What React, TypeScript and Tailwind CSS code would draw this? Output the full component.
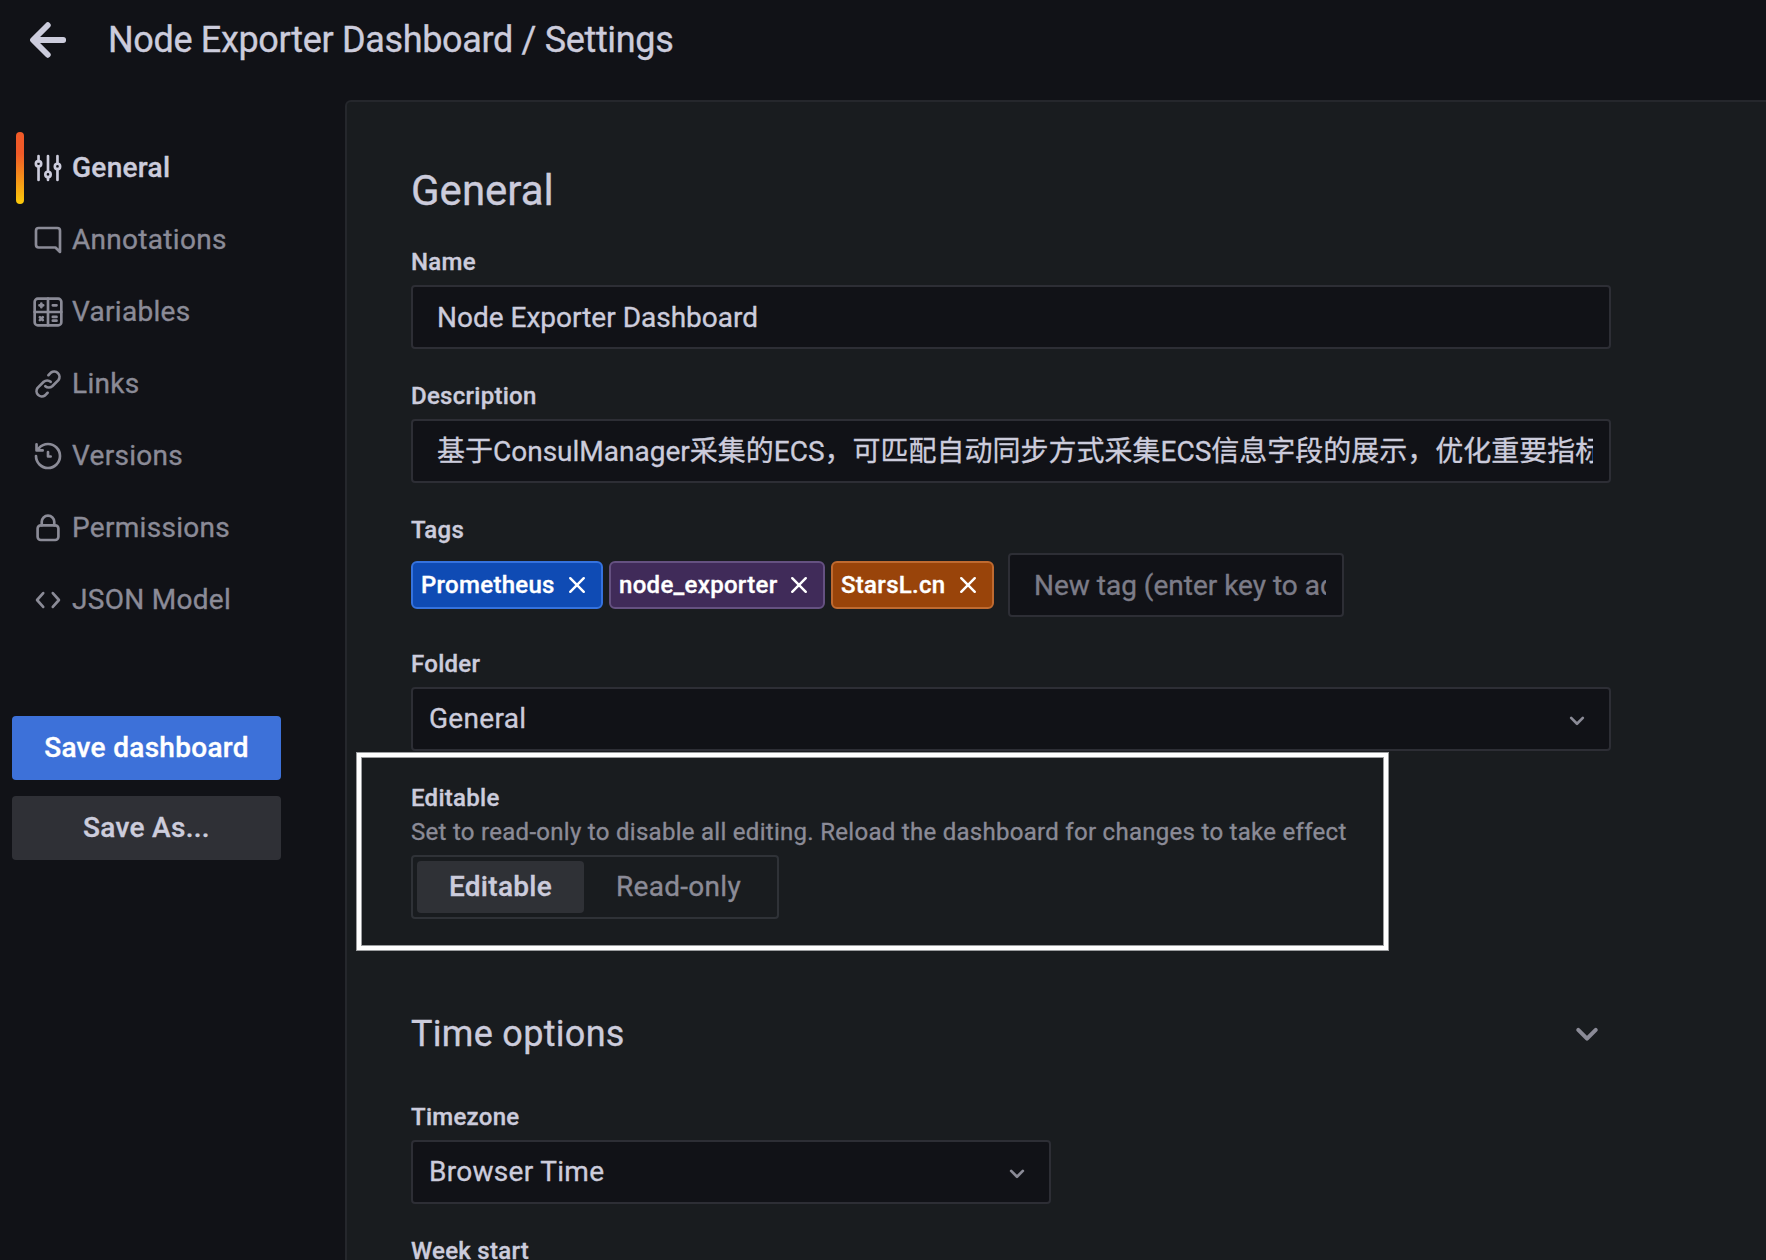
import React from "react";

type IconProps = { size?: number; className?: string; children: React.ReactNode; sw?: number };

function Icon({ size = 32, className = "", children, sw = 2 }: IconProps) {
  return (
    <svg
      width={size}
      height={size}
      viewBox="0 0 24 24"
      fill="none"
      stroke="currentColor"
      strokeWidth={sw}
      strokeLinecap="round"
      strokeLinejoin="round"
      className={`shrink-0 ${className}`}
    >
      {children}
    </svg>
  );
}

const ArrowLeft = () => (
  <Icon size={48} sw={2.9} className="text-[#ccccdc]">
    <path d="M19.6 12H5M11.9 4.6 4.5 12l7.4 7.4" />
  </Icon>
);

const Sliders = () => (
  <Icon>
    <path d="M4.9 3v4M4.9 10.8V21M12 3v11.8M12 18.8V21M19.1 3v5.8M19.1 12.8V21" />
    <circle cx="4.9" cy="8.8" r="2" />
    <circle cx="12" cy="16.8" r="2" />
    <circle cx="19.1" cy="10.8" r="2" />
  </Icon>
);

const Comment = () => (
  <Icon>
    <path d="M5 3h14a2 2 0 0 1 2 2v16l-3.4-3.4H5a2 2 0 0 1-2-2V5a2 2 0 0 1 2-2z" />
  </Icon>
);

const Calculator = () => (
  <Icon>
    <rect x="2" y="2" width="20" height="20" rx="2.4" />
    <path d="M12 2v20M2 12h20M5.6 7h2.8M7 5.6v2.8M15.6 7h2.8M15.6 15.7h2.8M15.6 18.5h2.8M5.9 15.9l2.2 2.2M8.1 15.9l-2.2 2.2" />
  </Icon>
);

const Chain = () => (
  <Icon>
    <path d="M10 13.6a4 4 0 0 0 5.2.1l4.6-4.6a4 4 0 0 0-5.6-5.6l-1.9 1.9" />
    <path d="M14 10.4a4 4 0 0 0-5.2-.1l-4.6 4.6a4 4 0 0 0 5.6 5.6l1.9-1.9" />
  </Icon>
);

const History = () => (
  <Icon>
    <path d="M3 12a9 9 0 1 0 9-9 9 9 0 0 0-6.8 3.1L3.6 7.6M3.4 3.2v4.6h4.6M12 9v3.4h2" />
  </Icon>
);

const Lock = () => (
  <Icon>
    <rect x="4.2" y="10" width="15.6" height="11" rx="2.4" />
    <path d="M7.3 10V7.4a4.7 4.7 0 0 1 9.4 0V10" />
  </Icon>
);

const Code = () => (
  <Icon>
    <path d="M8.4 6.8 3.8 12l4.6 5.2M15.6 6.8l4.6 5.2-4.6 5.2" />
  </Icon>
);

const Chevron = ({ size, className, sw }: { size: number; className?: string; sw?: number }) => (
  <Icon size={size} className={className} sw={sw}>
    <path d="m7 10.2 5 5 5-5" />
  </Icon>
);

const navItems = [
  { label: "General", icon: <Sliders />, active: true },
  { label: "Annotations", icon: <Comment /> },
  { label: "Variables", icon: <Calculator /> },
  { label: "Links", icon: <Chain /> },
  { label: "Versions", icon: <History /> },
  { label: "Permissions", icon: <Lock /> },
  { label: "JSON Model", icon: <Code /> },
];

const tags = [
  { label: "Prometheus", color: "bg-[#0f4bb4] border-[#3572de]", width: "w-[192px]" },
  { label: "node_exporter", color: "bg-[#402b59] border-[#655181]", width: "w-[216px]" },
  { label: "StarsL.cn", color: "bg-[#99440a] border-[#bf6a30]", width: "w-[163px]" },
];

function Label({ children, gap = "mb-[11px]" }: { children: React.ReactNode; gap?: string }) {
  return <div className={`h-6 text-[24px] leading-[24px] font-medium tracking-[0.28px] ${gap}`}>{children}</div>;
}

const box = "h-16 shrink-0 rounded-[4px] border-2 border-[#2d2e35] bg-[#111217]";

function Select({ value, className }: { value: string; className: string }) {
  return (
    <div className={`${box} flex items-center justify-between pl-4 pr-[18px] ${className}`}>
      <span className="-mt-px leading-[32px]">{value}</span>
      <Chevron size={28} sw={2.3} className="mt-0.5 text-[#8b8b97]" />
    </div>
  );
}

export default function App() {
  return (
    <div className="flex h-[1260px] w-[1766px] flex-col overflow-hidden bg-[#111217] font-['Roboto','Noto_Sans_CJK_SC',sans-serif] text-[28px] leading-[32px] tracking-[0.3px] text-[#ccccdc] [-webkit-text-stroke:0.35px]">
      <header className="flex h-[100px] shrink-0 items-start pl-6 pt-4">
        <ArrowLeft />
        <h1 className="ml-9 mt-1 text-[36px] leading-[40px] tracking-[-0.34px]">Node Exporter Dashboard / Settings</h1>
      </header>

      <div className="flex min-h-0 flex-1">
        <aside className="w-[345px] shrink-0 pt-8">
          <nav className="flex flex-col">
            {navItems.map((item) => (
              <div
                key={item.label}
                className={`flex h-[72px] items-center pl-4 ${item.active ? "font-medium" : "text-[#8b8b97]"}`}
              >
                <span
                  className={`mr-2 h-full w-2 rounded-[4px] ${item.active ? "bg-[linear-gradient(180deg,#f05a28_30%,#fbca0a_100%)]" : ""}`}
                />
                {item.icon}
                <span className="ml-2">{item.label}</span>
              </div>
            ))}
          </nav>
          <div className="ml-3 mt-20 flex w-[269px] flex-col gap-4 font-medium">
            <button className="h-16 rounded-[4px] bg-[#3d71d9] text-white">Save dashboard</button>
            <button className="h-16 rounded-[4px] bg-[#2f3036]">Save As...</button>
          </div>
        </aside>

        <main className="flex min-w-0 flex-1 flex-col rounded-tl-[6px] border-l-2 border-t-2 border-[#25272c] bg-[#191c1f] pl-16 pt-[65px]">
          <h2 className="mb-[35px] h-12 text-[42px] leading-[48px] tracking-normal">General</h2>

          <Label>Name</Label>
          <div className={`${box} flex w-[1200px] items-center pl-6 pr-4 pt-0.5`}>
            <span className="leading-[32px] tracking-normal">Node Exporter Dashboard</span>
          </div>

          <div className="h-[35px] shrink-0" />
          <Label>Description</Label>
          <div className={`${box} flex w-[1200px] items-center pl-6 pr-4 pt-0.5`}>
            <span className="h-9 overflow-hidden whitespace-nowrap leading-[36px] tracking-normal [-webkit-text-stroke:0.3px]">
              基于ConsulManager采集的ECS，可匹配自动同步方式采集ECS信息字段的展示，优化重要指标
            </span>
          </div>

          <div className="h-[35px] shrink-0" />
          <Label>Tags</Label>
          <div className="flex shrink-0 items-center">
            {tags.map((tag) => (
              <span
                key={tag.label}
                className={`mr-1.5 flex h-12 items-center justify-between rounded-[6px] border-2 pl-2 pr-[10px] text-[24px] leading-[28px] font-medium text-white ${tag.color} ${tag.width}`}
              >
                {tag.label}
                <Icon size={28} sw={2.1} className="text-white">
                  <path d="M6.2 6.2 17.8 17.8M17.8 6.2 6.2 17.8" />
                </Icon>
              </span>
            ))}
            <div className={`${box} ml-2 flex w-[336px] items-center pl-6 pr-4 pt-0.5`}>
              <span className="overflow-hidden whitespace-nowrap leading-[36px] tracking-normal text-[#7c7c88]">
                New tag (enter key to add)
              </span>
            </div>
          </div>

          <div className="h-[35px] shrink-0" />
          <Label>Folder</Label>
          <Select value="General" className="w-[1200px]" />

          <section className="relative mt-[35px] shrink-0">
            <div className="pointer-events-none absolute -left-[55px] -top-[34px] h-[199px] w-[1033px] border border-[#9b9d9f]">
              <div className="h-full w-full border-4 border-white">
                <div className="h-full w-full border border-[#9b9d9f]" />
              </div>
            </div>
            <Label gap="mb-2">Editable</Label>
            <p className="mb-[11px] h-[26px] text-[24px] leading-[28px] tracking-[0.285px] text-[#8b8b97]">
              Set to read-only to disable all editing. Reload the dashboard for changes to take effect
            </p>
            <div className="flex h-16 w-[368px] items-center rounded-[4px] border-2 border-[#2f3237] p-1">
              <div className="flex h-[52px] w-[167px] items-center justify-center rounded-[4px] bg-[#2f3136] font-medium">
                Editable
              </div>
              <div className="flex h-[52px] flex-1 items-center justify-center text-[#8b8b97]">Read-only</div>
            </div>
          </section>

          <div className="mt-[91px] flex h-12 w-[1200px] shrink-0 items-center justify-between pr-[3px]">
            <h3 className="text-[36px] leading-[48px] tracking-[0.3px]">Time options</h3>
            <Chevron size={42} sw={2.3} className="-mt-[3px] text-[#8b8b97]" />
          </div>

          <div className="h-[47px] shrink-0" />
          <Label>Timezone</Label>
          <Select value="Browser Time" className="w-[640px]" />

          <div className="h-[35px] shrink-0" />
          <Label>Week start</Label>
        </main>
      </div>
    </div>
  );
}
